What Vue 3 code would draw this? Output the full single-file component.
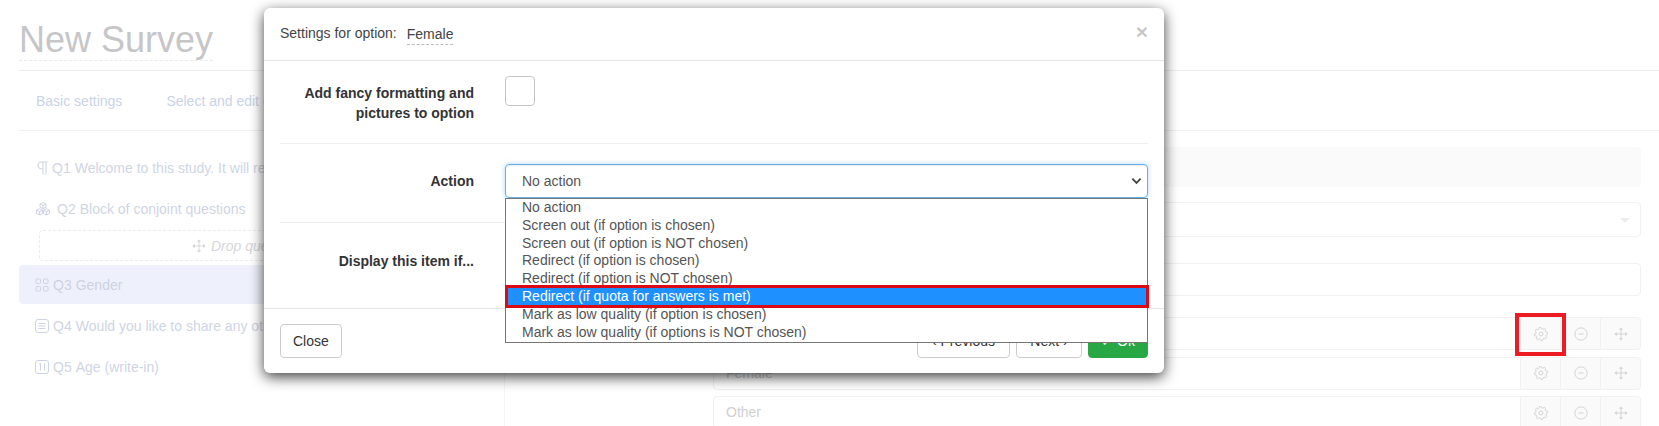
<template>
  <div class="page">
    <header class="survey-head">
      <h1 class="survey-title"><span>New Survey</span></h1>
    </header>
    <nav class="tabs">
      <a>Basic settings</a>
      <a>Select and edit questions</a>
    </nav>

    <main class="editor">
      <aside class="question-list">
        <div class="question">
          <svg class="q-icon pilcrow" viewBox="0 0 12 14"><path d="M11.500 1H5.200a3.300 3.300 0 0 0 0 6.800H7M7 1v12.500M10 1v12.500" /></svg>
          <span>Q1</span><span class="q-text">Welcome to this study. It will require a few minutes</span>
        </div>
        <div class="question">
          <svg class="q-icon q-wide" viewBox="0 0 16 16"><path d="M8 1.500l3 1.500v3.200l-3 1.500-3-1.500V3zM5 3l3 1.500L11 3M8 4.500v3.200M4.500 7.700l3 1.500v3.200l-3 1.500-3-1.500V9.200zM1.500 9.200l3 1.500 3-1.500M4.500 10.700v3.200M11.500 7.700l3 1.500v3.200l-3 1.500-3-1.500V9.200zM8.500 9.200l3 1.500 3-1.500M11.500 10.700v3.200" /></svg>
          <span>Q2</span><span class="q-text">Block of conjoint questions</span>
        </div>
        <div class="drop-zone">
          <svg class="drop-icon" viewBox="0 0 16 16"><path :d="moveLines" /><path class="arrow-heads" :d="moveHeads" /></svg>
          <em>Drop questions here</em>
        </div>
        <div class="question active">
          <svg class="q-icon" viewBox="0 0 14 14"><rect x="1" y="1" width="4.500" height="4.500" rx="0.800" /><rect x="8.500" y="1" width="4.500" height="4.500" rx="0.800" /><rect x="1" y="8.500" width="4.500" height="4.500" rx="0.800" /><rect x="8.500" y="8.500" width="4.500" height="4.500" rx="0.800" /></svg>
          <span>Q3</span><span class="q-text">Gender</span>
        </div>
        <div class="question">
          <svg class="q-icon" viewBox="0 0 14 14"><rect x="0.500" y="0.500" width="13" height="13" rx="2.500" /><path d="M3.500 4.500h7M3.500 7h7M3.500 9.500h7" /></svg>
          <span>Q4</span><span class="q-text">Would you like to share any other comments with us</span>
        </div>
        <div class="question">
          <svg class="q-icon" viewBox="0 0 14 14"><rect x="0.500" y="0.500" width="13" height="13" rx="2.500" /><path d="M4 4.500l1.500-1v7M9.500 3.500v7" /></svg>
          <span>Q5</span><span class="q-text">Age (write-in)</span>
        </div>
      </aside>

      <section class="question-form">
        <div class="info-box"></div>
        <div class="field select-field"><span class="caret"></span></div>
        <div class="field text-field"></div>
        <div v-for="(opt, i) in answerOptions" :key="opt" class="option-row">
          <div class="option-input">{{ opt }}</div>
          <div class="option-btn">
            <svg class="opt-icon" viewBox="0 0 16 16"><path :d="gearPath" /><circle cx="8" cy="8" r="2.300" /></svg>
            <span v-if="i === 0" class="red-box gear-mark"></span>
          </div>
          <div class="option-btn">
            <svg class="opt-icon" viewBox="0 0 16 16"><circle cx="8" cy="8" r="7" /><path d="M5 8h6" /></svg>
          </div>
          <div class="option-btn">
            <svg class="opt-icon" viewBox="0 0 16 16"><path :d="moveLines" /><path class="arrow-heads" :d="moveHeads" /></svg>
          </div>
        </div>
      </section>
    </main>

    <div class="modal">
      <div class="modal-head">
        <span>Settings for option:</span>
        <span class="option-name">Female</span>
        <span class="close-x">×</span>
      </div>

      <div class="modal-body">
        <div class="form-row row-fancy">
          <label>Add fancy formatting and pictures to option</label>
          <div class="checkbox"></div>
        </div>
        <div class="form-row row-action">
          <label>Action</label>
          <div class="select-wrap">
            <div class="select-box">
              <span>No action</span>
              <svg class="chevron" viewBox="0 0 12 8"><path d="M1.500 1.500L6 6l4.500-4.500" /></svg>
            </div>
            <ul class="dropdown">
              <li v-for="a in actions" :key="a" :class="{ selected: a === selectedAction }">{{ a }}</li>
            </ul>
            <span class="red-box action-mark"></span>
          </div>
        </div>
        <div class="form-row row-display">
          <label>Display this item if...</label>
        </div>
      </div>

      <div class="modal-foot">
        <button class="btn">Close</button>
        <div class="foot-right">
          <button class="btn btn-prev">‹ Previous</button>
          <button class="btn btn-next">Next ›</button>
          <button class="btn btn-ok">✓ Ok</button>
        </div>
      </div>
    </div>
  </div>
</template>

<script setup>
const answerOptions = ['Male', 'Female', 'Other']

const selectedAction = 'Redirect (if quota for answers is met)'
const actions = [
  'No action',
  'Screen out (if option is chosen)',
  'Screen out (if option is NOT chosen)',
  'Redirect (if option is chosen)',
  'Redirect (if option is NOT chosen)',
  selectedAction,
  'Mark as low quality (if option is chosen)',
  'Mark as low quality (if options is NOT chosen)',
]

// eight-tooth gear outline
const gearPath = (() => {
  const pts = []
  for (let i = 0; i < 48; i++) {
    const a = (i / 48) * Math.PI * 2
    const t = ((i + 2) % 6) / 6
    const r = t < 0.5 ? 7.6 : 5.9
    pts.push(`${(8 + r * Math.cos(a)).toFixed(2)} ${(8 + r * Math.sin(a)).toFixed(2)}`)
  }
  return 'M' + pts.join('L') + 'Z'
})()

const moveLines = 'M8 2v12M2 8h12'
const moveHeads = 'M5.500 3.200L8 0.500l2.500 2.700zM5.500 12.800L8 15.500l2.500-2.700zM3.200 5.500L0.500 8l2.700 2.500zM12.800 5.500L15.500 8l-2.700 2.500z'
</script>

<style scoped>
.page {
  position: relative;
  width: 1659px;
  height: 426px;
  overflow: hidden;
  background: #fff;
  font-family: "Liberation Sans", Arial, sans-serif;
  font-size: 14px;
  color: #333;
}

.survey-head {
  margin-left: 19px;
  height: 70px;
  border-bottom: 1px solid #eeeeee;
}

.survey-title {
  margin: 0;
  padding-top: 19px;
  font-size: 36px;
  line-height: 41px;
  font-weight: 400;
  color: #c6c6c8;
}

.survey-title span {
  display: inline-block;
  border-bottom: 1px dashed #eaeaea;
}

.tabs {
  margin-left: 19px;
  height: 60px;
  box-sizing: border-box;
  border-bottom: 1px solid #f0f0f0;
  display: flex;
  align-items: center;
  gap: 44px;
  padding-left: 17px;
  padding-top: 1px;
  color: #c9d3e6;
}

.editor {
  display: grid;
  grid-template-columns: 485px 1fr;
  margin-left: 19px;
}

.question-list {
  padding-top: 17px;
}

.question {
  display: flex;
  align-items: center;
  gap: 4px;
  height: 39px;
  margin-bottom: 2px;
  padding-left: 16px;
  border-radius: 4px;
  color: #cfd5e4;
  white-space: nowrap;
}

.question.active {
  background: #eef1fb;
  margin-top: 4px;
  color: #cdd2e2;
}

.q-icon {
  width: 14px;
  height: 14px;
  flex: none;
  fill: none;
  stroke: #cdd3e4;
  stroke-width: 1;
}

.q-icon.pilcrow {
  width: 12px;
  margin-left: 1px;
  height: 14px;
}

.q-icon.q-wide {
  width: 16px;
  height: 16px;
  margin-right: 2px;
}

.drop-zone {
  display: flex;
  align-items: center;
  justify-content: center;
  gap: 5px;
  height: 31px;
  margin: 2px 0 0 20px;
  padding-right: 14px;
  border: 1px dashed #ececec;
  border-radius: 4px;
  color: #d6d6d8;
  box-sizing: border-box;
}

.drop-icon {
  width: 14px;
  height: 14px;
  fill: none;
  stroke: #d4d4d6;
}

.arrow-heads {
  fill: #d4d4d6;
  stroke: none;
}

.question-form {
  border-left: 1px solid #f5f5f5;
  padding-top: 16px;
  padding-right: 18px;
  display: flex;
  flex-direction: column;
}

.info-box {
  height: 40px;
  background: #fafafa;
  border-radius: 3px;
  margin-left: 12px;
}

.field {
  border: 1px solid #f1f1f1;
  border-radius: 4px;
  box-sizing: border-box;
  margin-left: 12px;
}

.select-field {
  height: 35px;
  margin-top: 15px;
  position: relative;
}

.caret {
  position: absolute;
  right: 10px;
  top: 15px;
  border: 5px solid transparent;
  border-top: 5px solid #ececec;
}

.text-field {
  height: 33px;
  margin-top: 26px;
  margin-bottom: 21px;
}

.option-row {
  display: flex;
  height: 33px;
  margin-bottom: 6.500px;
  margin-left: 208px;
}

.option-input {
  flex: 1;
  border: 1px solid #f1f1f1;
  border-radius: 4px 0 0 4px;
  padding-left: 12px;
  line-height: 31px;
  color: #d0d0d0;
}

.option-btn {
  position: relative;
  width: 40px;
  flex: none;
  display: flex;
  align-items: center;
  justify-content: center;
  background: #fafafa;
  border: 1px solid #f1f1f1;
  border-left: 0;
  box-sizing: border-box;
}

.option-btn:last-child {
  border-radius: 0 4px 4px 0;
}

.opt-icon {
  width: 14px;
  height: 14px;
  fill: none;
  stroke: #cfcfcf;
  stroke-width: 1;
}

.red-box {
  position: absolute;
  box-sizing: border-box;
  border: 4px solid #ed1c24;
  pointer-events: none;
  z-index: 1;
}

.gear-mark {
  left: -6px;
  top: -5px;
  width: 51px;
  height: 43px;
}

.modal {
  position: absolute;
  left: 264px;
  top: 8px;
  width: 900px;
  height: 365px;
  background: #fff;
  border-radius: 6px;
  box-shadow: 0 4px 14px rgba(0, 0, 0, 0.75);
  display: flex;
  flex-direction: column;
  z-index: 2;
}

.modal-head {
  position: relative;
  display: flex;
  align-items: center;
  gap: 10px;
  height: 53px;
  box-sizing: border-box;
  padding: 0 16px 2px;
  border-bottom: 1px solid #e5e5e5;
  color: #444;
}

.option-name {
  border-bottom: 1px dashed #bbb;
  line-height: 20px;
  margin-top: 3px;
}

.close-x {
  position: absolute;
  right: 16px;
  top: 12px;
  font-size: 21px;
  font-weight: 700;
  line-height: 24px;
  color: #c8c8c8;
}

.modal-body {
  flex: 1;
  padding: 0 16px;
}

.form-row {
  display: grid;
  grid-template-columns: 194px 1fr;
  column-gap: 31px;
  border-bottom: 1px solid #eeeeee;
  box-sizing: border-box;
}

.form-row label {
  text-align: right;
  font-weight: 700;
  line-height: 20px;
}

.row-fancy {
  height: 83px;
  padding-top: 15px;
}

.row-fancy label {
  padding-top: 7px;
}

.checkbox {
  width: 30px;
  height: 30px;
  border: 1px solid #c4c4c4;
  border-radius: 4px;
  box-sizing: border-box;
}

.row-action {
  height: 79px;
  padding-top: 20px;
}

.row-action label {
  line-height: 34px;
}

.row-display {
  height: 85px;
  border-bottom: 0;
  padding-top: 28px;
}

.select-wrap {
  position: relative;
}

.select-box {
  display: flex;
  align-items: center;
  justify-content: space-between;
  height: 34px;
  box-sizing: border-box;
  padding: 0 5px 0 16px;
  border: 1px solid #66afe9;
  border-radius: 4px;
  box-shadow: inset 0 1px 1px rgba(0, 0, 0, 0.08), 0 0 5px rgba(102, 175, 233, 0.5);
  color: #555;
}

.chevron {
  width: 11px;
  height: 8px;
  fill: none;
  stroke: #444;
  stroke-width: 2;
}

.dropdown {
  position: absolute;
  left: 0;
  right: 0;
  top: 34px;
  z-index: 2;
  margin: 0;
  padding: 0 0 1px;
  list-style: none;
  background: #fff;
  border: 1px solid #767676;
  color: #555;
}

.dropdown li {
  height: 17.800px;
  line-height: 17px;
  padding-left: 16px;
}

.dropdown li.selected {
  background: #1e90ff;
  color: #fff;
}

.action-mark {
  z-index: 3;
  left: 0;
  right: -1px;
  top: 121px;
  height: 23px;
  border-width: 3px;
  border-color: #dc0a14;
}

.modal-foot {
  display: flex;
  align-items: flex-start;
  justify-content: space-between;
  height: 65px;
  box-sizing: border-box;
  padding: 15px 16px 0;
  border-top: 1px solid #e5e5e5;
}

.foot-right {
  display: flex;
  gap: 6px;
}

.btn {
  height: 34px;
  padding: 0 12px;
  border: 1px solid #ccc;
  border-radius: 4px;
  background: #fff;
  font: inherit;
  color: #333;
}

.btn-prev {
  width: 93px;
}

.btn-next {
  width: 66px;
}

.btn-ok {
  width: 60px;
  border-color: #28a745;
  background: #28a745;
  color: #fff;
}
</style>

<style>
html,
body {
  margin: 0;
  overflow: hidden;
}
</style>
